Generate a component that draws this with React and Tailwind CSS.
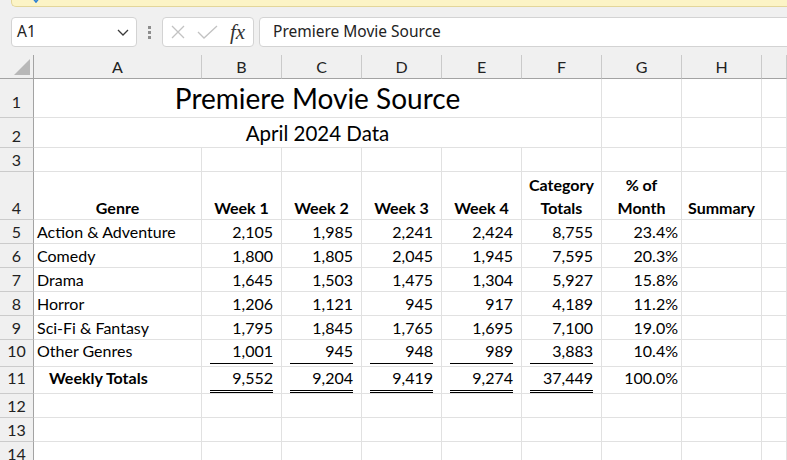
import { Fragment } from 'react';

const data = [
  ['Action & Adventure', '2,105', '1,985', '2,241', '2,424', '8,755', '23.4%'],
  ['Comedy', '1,800', '1,805', '2,045', '1,945', '7,595', '20.3%'],
  ['Drama', '1,645', '1,503', '1,475', '1,304', '5,927', '15.8%'],
  ['Horror', '1,206', '1,121', '945', '917', '4,189', '11.2%'],
  ['Sci-Fi & Fantasy', '1,795', '1,845', '1,765', '1,695', '7,100', '19.0%'],
];
const other = ['Other Genres', '1,001', '945', '948', '989', '3,883', '10.4%'];
const totals = ['Weekly Totals', '9,552', '9,204', '9,419', '9,274', '37,449', '100.0%'];

const gridLine = 'bg-white border-r border-b border-[#e1e1e1]';

function RowHead({ n, pb = 'pb-[1px]' }) {
  return (
    <div className={`flex items-end justify-center bg-[#f0f0f0] border-r border-r-[#a3a3a3] border-b border-b-[#cbcbcb] text-[#222] ${pb}`}>
      {n}
    </div>
  );
}

function Cell({ children, className = '' }) {
  return <div className={`flex items-end ${gridLine} ${className}`}>{children}</div>;
}

function Blank({ count }) {
  return Array.from({ length: count }).map((_, i) => <Cell key={i} />);
}

function ColHeaders() {
  return (
    <>
      <div className="flex items-end justify-end pr-[3px] pb-[3px] border-r border-r-[#a3a3a3] border-b border-b-[#a3a3a3]">
        <svg width="16" height="16" viewBox="0 0 16 16">
          <polygon points="0,16 16,16 16,0" fill="#b8b8b8" />
        </svg>
      </div>
      {['A', 'B', 'C', 'D', 'E', 'F', 'G', 'H', ''].map((c, i) => (
        <div
          key={i}
          className="flex items-end justify-center pb-[1px] text-[#222] border-r border-r-[#cacaca] border-b border-b-[#a3a3a3]"
        >
          {c}
        </div>
      ))}
    </>
  );
}

function DataRow({ n, row }) {
  return (
    <>
      <RowHead n={n} />
      <Cell className="pl-[3px] pb-[1px] whitespace-nowrap">{row[0]}</Cell>
      {row.slice(1, 6).map((v, i) => (
        <Cell key={i} className="justify-end pr-[8px] pb-[1px]">{v}</Cell>
      ))}
      <Cell className="justify-end pr-[3px] pb-[1px]">{row[6]}</Cell>
      <Blank count={2} />
    </>
  );
}

export default function App() {
  return (
    <div className="w-[787px] h-[460px] overflow-hidden bg-[#f0f0f0]">
      {/* notice bar */}
      <div className="ml-[11px] h-[7px] bg-[#fcf4c6] border-l border-b border-[#e3d69a] rounded-bl-[5px] overflow-hidden">
        <svg className="ml-[19px] mt-[-8px]" width="10" height="11" viewBox="0 0 10 11">
          <path d="M1 1 L9 1 L9 5 L5 10 L1 5 Z" fill="none" stroke="#2b7fd3" strokeWidth="1.6" />
        </svg>
      </div>

      {/* formula bar */}
      <div className="flex items-center h-[30px] mt-[10px] ml-[11px] font-['Segoe_UI','Noto_Sans',sans-serif] text-[15.5px] text-[#222]">
        <div className="flex items-center justify-between w-[126px] h-[30px] bg-white border border-[#d3d3d3] rounded-[4px] pl-[5px] pr-[7px]">
          <span>A1</span>
          <svg width="12" height="7" viewBox="0 0 12 7">
            <path d="M1 1 L6 6 L11 1" fill="none" stroke="#3a3a3a" strokeWidth="1.3" />
          </svg>
        </div>
        <div className="flex flex-col gap-[2px] ml-[11px]">
          <span className="w-[3px] h-[3px] bg-[#8d8d8d]" />
          <span className="w-[3px] h-[3px] bg-[#8d8d8d]" />
          <span className="w-[3px] h-[3px] bg-[#8d8d8d]" />
        </div>
        <div className="flex items-center w-[92px] h-[30px] ml-[11px] bg-white border border-[#d3d3d3] rounded-[4px]">
          <svg className="ml-[7px]" width="16" height="16" viewBox="0 0 16 16">
            <path d="M2 2 L14 14 M14 2 L2 14" stroke="#c2c2c2" strokeWidth="1.3" fill="none" />
          </svg>
          <svg className="ml-[11px]" width="21" height="14" viewBox="0 0 21 14">
            <path d="M1 7 L7 13 L20 1" stroke="#c2c2c2" strokeWidth="1.3" fill="none" />
          </svg>
          <span className="ml-[12px] font-['Liberation_Serif',serif] italic text-[21px] leading-none text-[#333]">fx</span>
        </div>
        <div className="flex items-center flex-1 h-[30px] ml-[5px] mr-[-10px] bg-white border border-[#d3d3d3] rounded-[4px] pl-[13px]">
          Premiere Movie Source
        </div>
      </div>

      {/* sheet */}
      <div className="mt-[8px] grid grid-cols-[34px_168px_repeat(7,80px)_1fr] grid-rows-[24px_39px_30px_24px_48px_24px_24px_24px_24px_24px_27px_27px_24px_24px_24px] font-['Lato',sans-serif] text-[16px] leading-[20px] text-black">
        <ColHeaders />

        {/* row 1 */}
        <RowHead n={1} pb="pb-[5px]" />
        <div className={`col-span-6 flex items-end justify-center pb-[2px] text-[28px] leading-[34px] ${gridLine}`}>
          Premiere Movie Source
        </div>
        <Blank count={3} />

        {/* row 2 */}
        <RowHead n={2} pb="pb-[1px]" />
        <div className={`col-span-6 flex items-end justify-center pb-[1px] text-[20.5px] leading-[25px] ${gridLine}`}>
          April 2024 Data
        </div>
        <Blank count={3} />

        {/* row 3 */}
        <RowHead n={3} />
        <Blank count={9} />

        {/* row 4 */}
        <RowHead n={4} />
        {['Genre', 'Week 1', 'Week 2', 'Week 3', 'Week 4'].map((t) => (
          <Cell key={t} className="justify-center font-bold leading-[23px]">{t}</Cell>
        ))}
        <Cell className="justify-center text-center font-bold leading-[23px]">Category<br />Totals</Cell>
        <Cell className="justify-center text-center font-bold leading-[23px]">% of<br />Month</Cell>
        <Cell className="justify-center font-bold leading-[23px] whitespace-nowrap">Summary</Cell>
        <Cell />

        {data.map((row, i) => (
          <DataRow key={row[0]} n={i + 5} row={row} />
        ))}

        {/* row 10 */}
        <RowHead n={10} pb="pb-[5px]" />
        <Cell className="pl-[3px] pb-[5px]">{other[0]}</Cell>
        {other.slice(1, 6).map((v, i) => (
          <Cell key={i} className="pb-[2px]">
            <div className="flex-1 mx-[8px] text-right pb-[2px] border-b border-black">{v}</div>
          </Cell>
        ))}
        <Cell className="justify-end pr-[3px] pb-[5px]">{other[6]}</Cell>
        <Blank count={2} />

        {/* row 11 */}
        <RowHead n={11} pb="pb-[5px]" />
        <Cell className="pl-[15px] pb-[5px] font-bold">{totals[0]}</Cell>
        {totals.slice(1, 6).map((v, i) => (
          <Cell key={i}>
            <div className="flex-1 mx-[8px] text-right pb-[2px] border-b-[3px] border-double border-black">{v}</div>
          </Cell>
        ))}
        <Cell className="justify-end pr-[3px] pb-[5px]">{totals[6]}</Cell>
        <Blank count={2} />

        {[12, 13, 14].map((n) => (
          <Fragment key={n}>
            <RowHead n={n} />
            <Blank count={9} />
          </Fragment>
        ))}
      </div>
    </div>
  );
}
